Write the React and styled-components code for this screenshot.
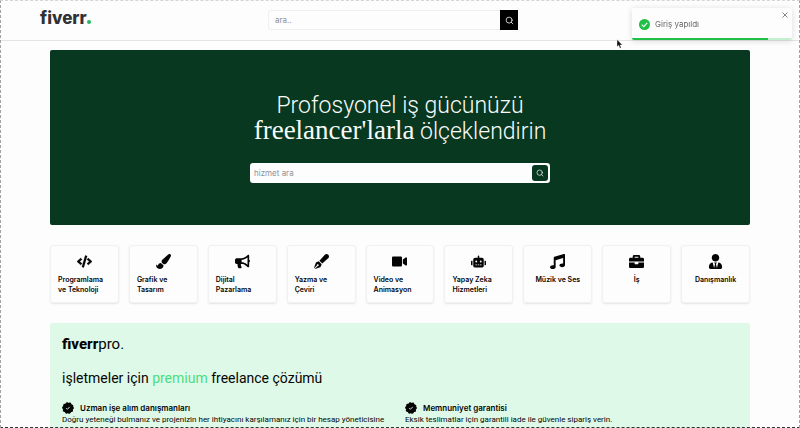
import React from "react";
import styled, { createGlobalStyle } from "styled-components";
import {
  FaCode,
  FaPaintBrush,
  FaBullhorn,
  FaPenFancy,
  FaVideo,
  FaRobot,
  FaMusic,
  FaUserTie,
  FaBriefcase,
} from "react-icons/fa";
import { FiSearch } from "react-icons/fi";

const Global = createGlobalStyle`
  *, *::before, *::after { box-sizing: border-box; }
  html { scrollbar-width: none; }
  body {
    margin: 0;
    background: #fdfdfe;
    color: #050505;
    font-family: Inter, "Liberation Sans", sans-serif;
  }
  h1, h2, h3, p, ul { margin: 0; padding: 0; }
  button { padding: 0; border: 0; cursor: pointer; }
  input { font-family: inherit; min-width: 0; }
`;

const Frame = styled.div`
  position: fixed;
  inset: 0;
  border: 1px dashed #a3a3a3;
  border-top-color: #d4d4d4;
  border-bottom-color: #333333;
  pointer-events: none;
  z-index: 10;
`;

const Header = styled.header`
  height: 41px;
  padding: 0 54px 0 40px;
  display: grid;
  grid-template-columns: 1fr 250px 1fr;
  align-items: center;
  border-bottom: 1px solid #e3e4e6;
`;

const Logo = styled.a`
  display: flex;
  align-items: baseline;
  padding-bottom: 4px;
  color: #303235;
  font-size: 17px;
  line-height: 20px;
  font-weight: 800;
  text-decoration: none;
`;

const LogoDot = styled.span`
  width: 4px;
  height: 4px;
  border-radius: 50%;
  background: #22b864;
`;

const HeaderSearch = styled.form`
  display: flex;
  height: 20px;
`;

const HeaderInput = styled.input`
  flex: 1;
  padding: 0 6px;
  border: 1px solid #f0f0f2;
  border-right: 0;
  border-radius: 3px 0 0 3px;
  background: #fdfdfe;
  font-size: 8px;
  outline: none;
  &::placeholder { color: #8d9199; opacity: 1; }
`;

const HeaderButton = styled.button`
  display: grid;
  place-items: center;
  width: 18px;
  background: #000000;
  color: #ffffff;
  font-size: 9px;
`;

const Content = styled.main`
  padding: 9px 50px 30px;
  display: flex;
  flex-direction: column;
  gap: 20px;
`;

const Hero = styled.section`
  height: 175px;
  display: flex;
  flex-direction: column;
  align-items: center;
  gap: 19px;
  padding-top: 44px;
  border-radius: 2px;
  background: #083820;
`;

const HeroTitle = styled.h1`
  color: #f8fbf9;
  font-family: Roboto, "Liberation Sans", sans-serif;
  font-size: 23px;
  line-height: 24px;
  font-weight: 300;
  text-align: center;
  white-space: nowrap;
`;

const Serif = styled.span`
  font-family: "Liberation Serif", serif;
  font-size: 27px;
  line-height: 24px;
  font-weight: 400;
`;

const HeroSearch = styled.form`
  display: flex;
  align-items: center;
  width: 300px;
  height: 20px;
  padding: 2px;
  border-radius: 3px;
  background: #fdfdfe;
`;

const HeroInput = styled.input`
  flex: 1;
  padding: 0 2px;
  border: 0;
  background: transparent;
  font-size: 8px;
  outline: none;
  &::placeholder { color: #8d9199; opacity: 1; }
`;

const HeroButton = styled.button`
  display: grid;
  place-items: center;
  width: 16px;
  height: 16px;
  border-radius: 3px;
  background: #083820;
  color: #ffffff;
  font-size: 8px;
`;

const Categories = styled.ul`
  display: grid;
  grid-template-columns: repeat(9, 1fr);
  gap: 10px;
  list-style: none;
`;

const Category = styled.li`
  display: flex;
  flex-direction: column;
  align-items: center;
  height: 58px;
  padding: 8px 7px;
  gap: 6px;
  border: 1px solid #f0f1f3;
  border-radius: 3px;
  box-shadow: 0 1px 2px rgba(0, 0, 0, 0.1);
  font-size: 7px;
  line-height: 10px;
  font-weight: 600;
  svg { flex: none; width: 15px; height: 15px; }
`;

const BoldCode = styled(FaCode)`
  stroke: currentColor;
  stroke-width: 12px;
`;

const CategoryName = styled.span`
  width: ${(p) => (p.$wide ? "100%" : "auto")};
  white-space: pre-line;
`;

const Pro = styled.section`
  padding: 12px 12px 20px;
  border-radius: 2px;
  background: #dff9e8;
`;

const ProLogo = styled.h2`
  font-family: Roboto, "Liberation Sans", sans-serif;
  font-size: 15px;
  line-height: 18px;
  font-weight: 400;
`;

const ProBold = styled.span`
  font-weight: 800;
`;

const ProTitle = styled.h3`
  margin-top: 15px;
  font-family: Roboto, "Liberation Sans", sans-serif;
  font-size: 14px;
  line-height: 20px;
  font-weight: 400;
`;

const Premium = styled.span`
  color: #4ade80;
`;

const Features = styled.div`
  display: grid;
  grid-template-columns: 1fr 1fr;
  gap: 10px;
  margin-top: 14px;
`;

const FeatureTitle = styled.div`
  display: flex;
  align-items: center;
  gap: 6px;
  font-size: 8px;
  line-height: 12px;
  font-weight: 600;
`;

const BadgeIcon = styled.svg`
  width: 12px;
  height: 12px;
`;

const FeatureText = styled.p`
  font-family: Roboto, "Liberation Sans", sans-serif;
  font-size: 8px;
  line-height: 12px;
`;

const Toast = styled.div`
  position: fixed;
  top: 8px;
  right: 8px;
  width: 160px;
  height: 32px;
  display: flex;
  align-items: center;
  gap: 5px;
  padding: 0 7px;
  border-radius: 2px;
  background: #fdfdfd;
  box-shadow: 0 1px 6px rgba(0, 0, 0, 0.14);
  color: #666666;
  font-size: 8px;
  z-index: 5;
  overflow: hidden;
`;

const ToastIcon = styled.svg`
  width: 11px;
  height: 11px;
`;

const CloseButton = styled.button`
  position: absolute;
  top: 4px;
  right: 4px;
  display: grid;
  background: transparent;
  svg { width: 6px; height: 6px; }
`;

const Progress = styled.div`
  position: absolute;
  left: 0;
  right: 0;
  bottom: 0;
  height: 2px;
  background: #c4f0cf;
`;

const ProgressBar = styled.div`
  width: 85%;
  height: 100%;
  background: #20bf46;
`;

const Pointer = styled.svg`
  position: fixed;
  top: 39px;
  left: 616px;
  width: 7px;
  height: 10px;
  z-index: 11;
  pointer-events: none;
`;

const Badge = () => (
  <BadgeIcon viewBox="0 0 12 12" aria-hidden="true">
    <circle cx="6" cy="6" r="5.2" fill="#050505" />
    <circle
      cx="6"
      cy="6"
      r="4.6"
      fill="none"
      stroke="#050505"
      strokeWidth="2.6"
      strokeLinecap="round"
      strokeDasharray="0 2.89"
    />
    <path d="M4.2 6.1l1.2 1.2 2.3-2.4" fill="none" stroke="#dff9e8" strokeWidth="0.9" />
  </BadgeIcon>
);

const categories = [
  { name: "Programlama\nve Teknoloji", Icon: BoldCode, wide: true },
  { name: "Grafik ve\nTasarım", Icon: FaPaintBrush, wide: true },
  { name: "Dijital\nPazarlama", Icon: FaBullhorn, wide: true },
  { name: "Yazma ve\nÇeviri", Icon: FaPenFancy, wide: true },
  { name: "Video ve\nAnimasyon", Icon: FaVideo, wide: true },
  { name: "Yapay Zeka\nHizmetleri", Icon: FaRobot, wide: true },
  { name: "Müzik ve Ses", Icon: FaMusic },
  { name: "İş", Icon: FaBriefcase },
  { name: "Danışmanlık", Icon: FaUserTie },
];

const features = [
  {
    title: "Uzman işe alım danışmanları",
    text: "Doğru yeteneği bulmanız ve projenizin her ihtiyacını karşılamanız için bir hesap yöneticisine",
  },
  {
    title: "Memnuniyet garantisi",
    text: "Eksik teslimatlar için garantili iade ile güvenle sipariş verin.",
  },
];

export default function App() {
  return (
    <>
      <Global />
      <Header>
        <Logo href="#">
          fiverr
          <LogoDot />
        </Logo>
        <HeaderSearch>
          <HeaderInput type="text" placeholder="ara.." aria-label="ara" />
          <HeaderButton type="button" aria-label="Ara">
            <FiSearch />
          </HeaderButton>
        </HeaderSearch>
      </Header>
      <Content>
        <Hero>
          <HeroTitle>
            Profosyonel iş gücünüzü
            <br />
            <Serif>freelancer'larla</Serif> ölçeklendirin
          </HeroTitle>
          <HeroSearch>
            <HeroInput type="text" placeholder="hizmet ara" aria-label="hizmet ara" />
            <HeroButton type="button" aria-label="Hizmet ara">
              <FiSearch />
            </HeroButton>
          </HeroSearch>
        </Hero>
        <Categories>
          {categories.map(({ name, Icon, wide }) => (
            <Category key={name}>
              <Icon />
              <CategoryName $wide={wide}>{name}</CategoryName>
            </Category>
          ))}
        </Categories>
        <Pro>
          <ProLogo>
            <ProBold>fiverr</ProBold>pro.
          </ProLogo>
          <ProTitle>
            işletmeler için <Premium>premium</Premium> freelance çözümü
          </ProTitle>
          <Features>
            {features.map((f) => (
              <div key={f.title}>
                <FeatureTitle>
                  <Badge />
                  {f.title}
                </FeatureTitle>
                <FeatureText>{f.text}</FeatureText>
              </div>
            ))}
          </Features>
        </Pro>
      </Content>
      <Toast role="status">
        <ToastIcon viewBox="0 0 24 24">
          <circle cx="12" cy="12" r="12" fill="#20bf46" />
          <path d="M6 12.5l4.2 4.2L18 8.2" fill="none" stroke="#ffffff" strokeWidth="2.4" />
        </ToastIcon>
        Giriş yapıldı
        <CloseButton type="button" aria-label="Kapat">
          <svg viewBox="0 0 6 6">
            <path d="M.5 .5l5 5M5.5 .5l-5 5" stroke="#777777" strokeWidth="0.9" />
          </svg>
        </CloseButton>
        <Progress>
          <ProgressBar />
        </Progress>
      </Toast>
      <Frame />
      <Pointer viewBox="0 0 7 10">
        <path d="M1 .5v7.3l1.7-1.5 1.2 3 1.3-.6-1.2-2.8h2.4z" fill="#111111" stroke="#ffffff" strokeWidth="0.4" />
      </Pointer>
    </>
  );
}
